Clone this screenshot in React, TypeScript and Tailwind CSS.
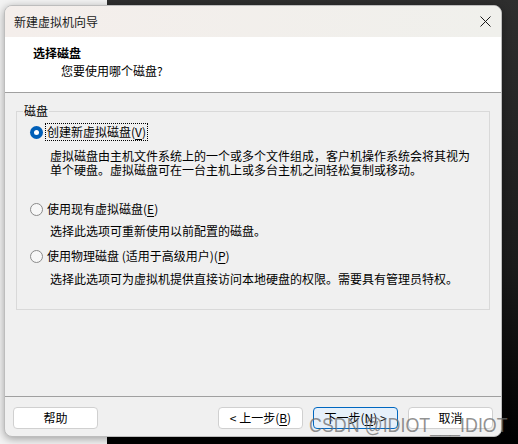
import React from "react";

const cjk = { fontFamily: '"Noto Sans CJK SC", "Noto Sans", sans-serif' };

function Radio({ checked }: { checked?: boolean }) {
  if (checked) {
    return (
      <span className="flex h-[13px] w-[13px] shrink-0 items-center justify-center rounded-full bg-[#005fb8]">
        <span className="h-[5px] w-[5px] rounded-full bg-white" />
      </span>
    );
  }
  return <span className="h-[13px] w-[13px] shrink-0 rounded-full border border-[#8a8a8a] bg-[#f7f7f7]" />;
}

function Option({
  checked,
  focused,
  label,
  keyChar,
  children,
}: {
  checked?: boolean;
  focused?: boolean;
  label: string;
  keyChar: string;
  children: React.ReactNode;
}) {
  return (
    <div>
      <div className="flex h-[18px] items-center gap-[2px] pl-[13px]">
        <Radio checked={checked} />
        <span
          className={
            "px-[1px] leading-[16px] " + (focused ? "border border-dotted border-black" : "border border-transparent")
          }
        >
          {label}(<span className="underline underline-offset-2">{keyChar}</span>)
        </span>
      </div>
      {children}
    </div>
  );
}

export default function App() {
  return (
    <div
      className="relative h-[444px] w-[518px] overflow-hidden bg-[linear-gradient(to_right,#f3f3f3_0,#f3f3f3_107px,transparent_107px),linear-gradient(to_bottom,#2e2e2e,#1a1a1a_60%,#000)] pl-[4px] pt-[5px] text-[12px] text-black"
      style={cjk}
    >
      <div className="flex h-[432px] w-[498px] flex-col overflow-hidden rounded-[8px] border border-[#bdbdbd] bg-[#f0f0f0] shadow-[0_2px_8px_rgba(0,0,0,0.35)]">
        {/* title bar */}
        <div className="flex h-[31px] shrink-0 items-center justify-between bg-[linear-gradient(to_right,#f4eeeb,#f0f0ec)] pl-[9px] pr-[9px]">
          <span className="text-[12px] text-[#1a1a1a]">新建虚拟机向导</span>
          <svg width="11" height="11" viewBox="0 0 11 11" className="mr-[1px]">
            <path d="M0.5 0.5 L10.5 10.5 M10.5 0.5 L0.5 10.5" stroke="#1a1a1a" strokeWidth="1" />
          </svg>
        </div>

        {/* header */}
        <div className="h-[56px] shrink-0 border-b border-[#a0a0a0] bg-white pt-[8px]">
          <div className="pl-[28px] font-bold leading-[16px]">选择磁盘</div>
          <div className="mt-[2px] pl-[56px] leading-[16px]">您要使用哪个磁盘?</div>
        </div>

        {/* body */}
        <div className="flex-1 px-[11px] pt-[18px]">
          <div className="relative h-[199px] border border-[#d9d9d9] pt-[11px]">
            <span className="absolute -top-[8px] left-[6px] bg-[#f0f0f0] px-[1px] leading-[14px]">磁盘</span>

            <Option checked focused label="创建新虚拟磁盘" keyChar="V">
              <div className="mt-[8px] pl-[33px] leading-[14px]">
                <div>虚拟磁盘由主机文件系统上的一个或多个文件组成，客户机操作系统会将其视为</div>
                <div>单个硬盘。虚拟磁盘可在一台主机上或多台主机之间轻松复制或移动。</div>
              </div>
            </Option>

            <div className="mt-[23px]">
              <Option label="使用现有虚拟磁盘" keyChar="E">
                <div className="mt-[6px] pl-[33px] leading-[14px]">选择此选项可重新使用以前配置的磁盘。</div>
              </Option>
            </div>

            <div className="mt-[9px]">
              <Option label="使用物理磁盘 (适用于高级用户)" keyChar="P">
                <div className="mt-[7px] pl-[33px] leading-[14px]">
                  选择此选项可为虚拟机提供直接访问本地硬盘的权限。需要具有管理员特权。
                </div>
              </Option>
            </div>
          </div>
        </div>

        {/* footer */}
        <div className="flex h-[40px] shrink-0 items-start border-t border-[#a0a0a0] px-[8px] pt-[10px]">
          <button className="h-[22px] w-[85px] rounded-[4px] border border-[#d0d0d0] bg-white">帮助</button>
          <div className="flex-1" />
          <div className="flex gap-[10px]">
            <button className="h-[22px] w-[85px] rounded-[4px] border border-[#d0d0d0] bg-white">
              &lt; 上一步(<span className="underline underline-offset-2">B</span>)
            </button>
            <button className="h-[22px] w-[85px] rounded-[4px] border border-[#0067c0] bg-[#e6f0fa]">
              下一步(<span className="underline underline-offset-2">N</span>) &gt;
            </button>
            <button className="h-[22px] w-[85px] rounded-[4px] border border-[#d0d0d0] bg-white">取消</button>
          </div>
        </div>
      </div>

      {/* watermark */}
      <div
        className="pointer-events-none absolute left-[309px] top-[413px] origin-left scale-x-[0.85] whitespace-nowrap text-[21px] leading-[24px] text-[rgba(110,110,110,0.75)]"
        style={{ fontFamily: '"Liberation Sans Narrow", "Liberation Sans", sans-serif' }}
      >
        CSDN @IDIOT___IDIOT
      </div>
    </div>
  );
}
